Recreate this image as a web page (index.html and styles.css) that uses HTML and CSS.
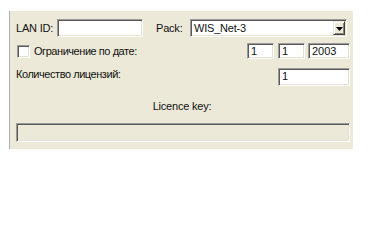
FILE: index.html
```html
<!DOCTYPE html>
<html>
<head>
<meta charset="utf-8">
<link rel="stylesheet" href="styles.css">
</head>
<body>
<div class="panel">
  <div class="row r1">
    <span class="lbl lan-lbl">LAN ID:</span>
    <div class="edit lan"></div>
    <span class="lbl pack-lbl">Pack:</span>
    <div class="edit combo">
      <span class="combo-text">WIS_Net-3</span>
      <div class="drop">
        <svg width="7" height="4" viewBox="0 0 7 4"><path d="M0 0H7L3.5 4Z" fill="#000"/></svg>
      </div>
    </div>
  </div>
  <div class="row r2">
    <span class="chk"></span>
    <span class="lbl cyr">Ограничение по дате:</span>
    <div class="dates">
      <div class="edit d1"><span class="val">1</span></div>
      <div class="edit d2"><span class="val">1</span></div>
      <div class="edit d3"><span class="val">2003</span></div>
    </div>
  </div>
  <div class="row r3">
    <span class="lbl cyr">Количество лицензий:</span>
    <div class="edit count"><span class="val">1</span></div>
  </div>
  <div class="row r4">
    <span class="lbl">Licence key:</span>
  </div>
  <div class="row r5">
    <div class="edit key"></div>
  </div>
</div>
</body>
</html>
```

FILE: styles.css
```css
* { box-sizing: border-box; }
html, body {
  margin: 0;
  padding: 0;
  background: #ffffff;
}
body {
  font-family: "Liberation Sans", Arial, sans-serif;
  font-size: 11px;
  color: #111;
}
.panel {
  margin: 11px 0 0 9px;
  width: 344px;
  height: 138px;
  background: #ece9d8;
  border-left: 1px solid #a7b0be;
  padding: 8px 3px 0 6px;
}
.row {
  display: flex;
  align-items: center;
}
.lbl {
  line-height: 13px;
  white-space: nowrap;
  letter-spacing: -0.2px;
}
.lbl.cyr { letter-spacing: -0.45px; }
.edit {
  background: #fff;
  border-top: 1px solid #9a9a9a;
  border-left: 1px solid #9a9a9a;
  border-right: 1px solid #fff;
  border-bottom: 1px solid #fff;
  box-shadow: inset 1px 1px 0 #5a5a5a, inset -1px -1px 0 #e4e1d2;
  display: flex;
  align-items: center;
}
.val {
  padding-left: 3px;
  line-height: 13px;
}
.r1 { height: 18px; }
.lan-lbl { width: 41px; }
.lan { width: 86px; height: 18px; }
.pack-lbl { margin-left: 13px; width: 34px; }
.combo {
  width: 157px;
  height: 18px;
  padding: 1px 1px 1px 3px;
  justify-content: space-between;
}
.combo-text { line-height: 13px; letter-spacing: -0.2px; }
.drop {
  width: 12px;
  height: 14px;
  background: #ece9d8;
  border-top: 1px solid #ece9d8;
  border-left: 1px solid #ece9d8;
  border-right: 1px solid #404040;
  border-bottom: 1px solid #404040;
  box-shadow: inset 1px 1px 0 #fff, inset -1px -1px 0 #8a877a;
  display: flex;
  align-items: center;
  justify-content: center;
}
.drop svg { display: block; margin-top: 1px; }
.r2 { margin-top: 6px; height: 16px; }
.chk {
  width: 13px;
  height: 13px;
  margin-left: 1px;
  margin-right: 4px;
  background: #fff;
  border-top: 1px solid #9a9a9a;
  border-left: 1px solid #9a9a9a;
  border-right: 1px solid #fff;
  border-bottom: 1px solid #fff;
  box-shadow: inset 1px 1px 0 #5a5a5a, inset -1px -1px 0 #e4e1d2;
}
.dates {
  margin-left: auto;
  display: flex;
}
.dates .edit { height: 16px; }
.d1 { width: 27px; }
.d2 { width: 27px; margin-left: 4px; }
.d3 { width: 42px; margin-left: 3px; }
.r3 {
  margin-top: 9px;
  align-items: flex-start;
  justify-content: space-between;
}
.count { width: 72px; height: 18px; align-items: flex-start; padding-top: 1px; }
.r4 {
  margin-top: 14px;
  justify-content: center;
  padding-right: 2px;
}
.r5 { margin-top: 10px; }
.key {
  width: 334px;
  height: 19px;
  background: #ece9d8;
}
```
